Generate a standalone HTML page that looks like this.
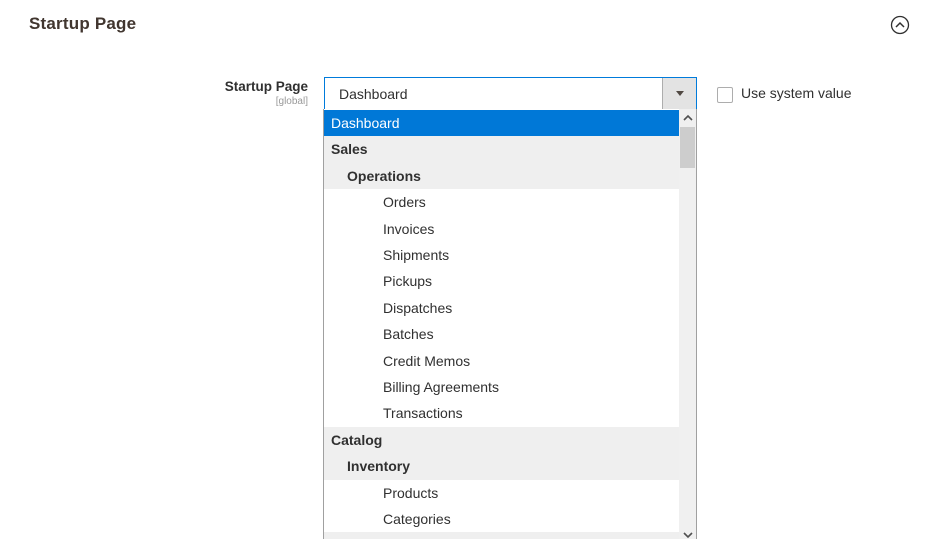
<!DOCTYPE html>
<html><head><meta charset="utf-8"><style>
*{margin:0;padding:0;box-sizing:border-box}
html,body{width:947px;height:539px;overflow:hidden}
body{background:#fff;font-family:"Liberation Sans",sans-serif;color:#303030;position:relative}
.abs{position:absolute}
h1{position:absolute;left:29px;top:14px;font-size:17px;font-weight:bold;color:#41362f;letter-spacing:0.2px}
.lbl{position:absolute;right:639px;top:79px;text-align:right;font-size:13.5px;font-weight:bold;color:#303030}
.glob{position:absolute;right:639px;top:96px;font-size:10px;color:#999}
.sel{position:absolute;left:324px;top:77px;width:373px;height:33px;border:1px solid #007bdb;background:#fff}
.sel span{position:absolute;left:14px;top:8px;font-size:14px;color:#303030}
.btn{position:absolute;right:0;top:0;width:34px;height:31px;background:#e3e3e3;border-left:1px solid #adadad}
.btn:after{content:"";position:absolute;left:13px;top:13px;border-left:4px solid transparent;border-right:4px solid transparent;border-top:5px solid #514943}
.list{position:absolute;left:323px;top:109px;width:374px;height:431px;border:1px solid #a0a0a0;border-top:none;overflow:hidden;background:#fff}
.row{position:absolute;left:0;width:355px;height:26.4px;font-size:14px;line-height:26px;white-space:nowrap}
.g{background:#efefef;font-weight:bold;color:#303030}
.sb{position:absolute;left:355px;top:0;width:17px;height:440px;background:#f0f0f0}
.thumb{position:absolute;left:356px;top:18px;width:15px;height:41px;background:#cdcdcd}
.cb{position:absolute;left:717px;top:87px;width:16px;height:16px;border:1px solid #adadad;border-radius:2px;background:#fff}
.usv{position:absolute;left:741px;top:85px;font-size:14px;color:#303030}
</style></head><body>
<h1>Startup Page</h1>
<svg class="abs" style="left:890px;top:15px" width="20" height="20" viewBox="0 0 20 20"><circle cx="10" cy="10" r="8.5" fill="none" stroke="#303030" stroke-width="1.3"/><path d="M6 12 L10 8 L14 12" fill="none" stroke="#303030" stroke-width="1.5"/></svg>
<div class="lbl">Startup Page</div>
<div class="glob">[global]</div>
<div class="sel"><span>Dashboard</span><div class="btn"></div></div>
<div class="cb"></div>
<div class="usv">Use system value</div>
<div class="list">
<div class="row" style="top:1px;background:#0078d7;color:#fff;padding-left:7px">Dashboard</div>
<div class="row g" style="top:27.4px;padding-left:7px">Sales</div>
<div class="row g" style="top:53.8px;padding-left:23px">Operations</div>
<div class="row" style="top:80.2px;padding-left:59px">Orders</div>
<div class="row" style="top:106.6px;padding-left:59px">Invoices</div>
<div class="row" style="top:133px;padding-left:59px">Shipments</div>
<div class="row" style="top:159.4px;padding-left:59px">Pickups</div>
<div class="row" style="top:185.8px;padding-left:59px">Dispatches</div>
<div class="row" style="top:212.2px;padding-left:59px">Batches</div>
<div class="row" style="top:238.6px;padding-left:59px">Credit Memos</div>
<div class="row" style="top:265px;padding-left:59px">Billing Agreements</div>
<div class="row" style="top:291.4px;padding-left:59px">Transactions</div>
<div class="row g" style="top:317.8px;padding-left:7px">Catalog</div>
<div class="row g" style="top:344.2px;padding-left:23px">Inventory</div>
<div class="row" style="top:370.6px;padding-left:59px">Products</div>
<div class="row" style="top:397px;padding-left:59px">Categories</div>
<div class="row g" style="top:423.4px;padding-left:7px"></div>
<div class="sb"></div>
<div class="thumb"></div>
<svg class="abs" style="left:359px;top:5px" width="10" height="8" viewBox="0 0 10 8"><path d="M1 6 L5 2 L9 6" fill="none" stroke="#505050" stroke-width="1.6"/></svg>
<svg class="abs" style="left:359px;top:422px" width="10" height="8" viewBox="0 0 10 8"><path d="M1 2 L5 6 L9 2" fill="none" stroke="#505050" stroke-width="1.6"/></svg>
</div>
</body></html>
